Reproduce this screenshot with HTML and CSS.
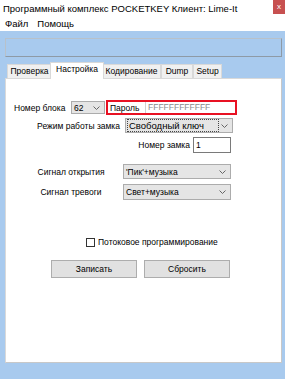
FILE: index.html
```html
<!DOCTYPE html>
<html>
<head>
    <title>POCKETKEY</title>
    <link rel="stylesheet" href="styles.css">
</head>
<body>
<div class="titlebar">
    <span class="title">Программный комплекс POCKETKEY Клиент: Lime-It</span>
    <span class="close">x</span>
</div>
<div class="menubar">
    <span>Файл</span>
    <span>Помощь</span>
</div>
<div class="client">
    <div class="status"></div>
    <div class="tabs">
        <div class="tab tab-check">Проверка</div>
        <div class="tab active">Настройка</div>
        <div class="tab tab-code">Кодирование</div>
        <div class="tab tab-dump">Dump</div>
        <div class="tab tab-setup">Setup</div>
    </div>
    <div class="panel">
        <div class="row row-block">
            <span class="lbl lbl-block">Номер блока</span>
            <div class="combo combo-block"><span>62</span><svg width="7" height="4" viewBox="0 0 7 4"><polyline points="0.5,0.5 3.5,3.5 6.5,0.5" fill="none" stroke="#666" stroke-width="1"/></svg></div>
            <div class="pass">
                <span class="lbl-pass">Пароль</span>
                <div class="pass-input">FFFFFFFFFFFF</div>
            </div>
        </div>
        <div class="row row-mode">
            <span class="lbl lbl-mode">Режим работы замка</span>
            <div class="combo combo-wide combo-focus"><span class="focus">Свободный ключ</span><svg width="7" height="4" viewBox="0 0 7 4"><polyline points="0.5,0.5 3.5,3.5 6.5,0.5" fill="none" stroke="#666" stroke-width="1"/></svg></div>
        </div>
        <div class="row row-lock">
            <span class="lbl lbl-lock">Номер замка</span>
            <div class="num-input">1</div>
        </div>
        <div class="row row-open">
            <span class="lbl lbl-signal">Сигнал открытия</span>
            <div class="combo combo-wide"><span>'Пик'+музыка</span><svg width="7" height="4" viewBox="0 0 7 4"><polyline points="0.5,0.5 3.5,3.5 6.5,0.5" fill="none" stroke="#666" stroke-width="1"/></svg></div>
        </div>
        <div class="row row-alarm">
            <span class="lbl lbl-signal">Сигнал тревоги</span>
            <div class="combo combo-wide combo-tall"><span>Свет+музыка</span><svg width="7" height="4" viewBox="0 0 7 4"><polyline points="0.5,0.5 3.5,3.5 6.5,0.5" fill="none" stroke="#666" stroke-width="1"/></svg></div>
        </div>
        <div class="row row-check">
            <span class="checkbox"></span>
            <span>Потоковое программирование</span>
        </div>
        <div class="row row-buttons">
            <div class="btn">Записать</div>
            <div class="btn">Сбросить</div>
        </div>
    </div>
</div>
</body>
</html>
```

FILE: styles.css
```css
* {
    box-sizing: border-box;
}
body {
    margin: 0;
    width: 285px;
    height: 379px;
    overflow: hidden;
    font-family: "Liberation Sans", Arial, sans-serif;
    font-size: 8.5px;
    color: #000;
    background-color: #a8caee;
}
.titlebar {
    height: 15px;
    background-color: #fff;
    display: flex;
    justify-content: space-between;
    align-items: flex-start;
}
.title {
    padding: 3px 0 0 3px;
    font-size: 9.5px;
}
.close {
    width: 12px;
    height: 14px;
    background-color: #c75050;
    color: #fff;
    font-size: 8px;
    line-height: 13px;
    text-align: center;
}
.menubar {
    height: 16px;
    background-color: #fff;
    display: flex;
    align-items: center;
    gap: 9px;
    padding-left: 5px;
    font-size: 9.5px;
}
.client {
    height: 348px;
    padding: 7px 3px 0 5px;
}
.status {
    height: 19px;
    border: 1px solid #b8c1ca;
    border-right-color: #8e9aa6;
    border-bottom-color: #8e9aa6;
    background-color: #a8caee;
}
.tabs {
    display: flex;
    align-items: flex-end;
    height: 16px;
    margin-top: 5px;
    padding-left: 2px;
}
.tab {
    height: 14px;
    line-height: 13px;
    text-align: center;
    border: 1px solid #d9d9d9;
    border-bottom: none;
    background-color: #f0f0f0;
}
.tab-check {
    width: 45px;
}
.tab-code {
    width: 59px;
}
.tab-dump {
    width: 32px;
}
.tab-setup {
    width: 29px;
}
.tab.active {
    position: relative;
    z-index: 1;
    width: 54px;
    height: 17px;
    margin: 0 -2px -1px;
    line-height: 12px;
    background-color: #fff;
}
.panel {
    height: 285px;
    border: 1px solid #d9d9d9;
    border-right-color: #c8c8c8;
    border-bottom-color: #c8c8c8;
    background-color: #fff;
}
.row {
    display: flex;
    align-items: center;
}
.lbl {
    flex-shrink: 0;
}
.combo {
    display: flex;
    align-items: center;
    justify-content: space-between;
    height: 15px;
    padding: 0 4px 0 2px;
    border: 1px solid #acacac;
    background-color: #e5e5e5;
}
.combo svg {
    flex-shrink: 0;
}

/* номер блока + пароль */
.row-block {
    margin-top: 21px;
    height: 15px;
    padding-left: 8px;
}
.lbl-block {
    width: 57px;
}
.combo-block {
    width: 34px;
    height: 13px;
}
.pass {
    display: flex;
    align-items: center;
    width: 131px;
    height: 15px;
    margin-left: 1px;
    padding-left: 2px;
    border: 2px solid #e81123;
}
.lbl-pass {
    width: 35px;
}
.pass-input {
    width: 90px;
    height: 11px;
    padding-left: 2px;
    line-height: 10px;
    color: #8a8a8a;
    border-left: 1px solid #d0d0d0;
}

/* режим работы */
.row-mode {
    margin-top: 3px;
}
.lbl-mode {
    width: 119px;
    padding-right: 5px;
    text-align: right;
}
.combo-wide {
    width: 108px;
}
.combo-focus {
    padding-left: 1px;
}
.focus {
    width: 92px;
    height: 13px;
    padding-left: 1px;
    line-height: 11px;
    border: 1px dotted #444;
    font-size: 9.5px;
}

/* номер замка */
.row-lock {
    margin-top: 4px;
}
.lbl-lock {
    width: 187px;
    padding-right: 3px;
    text-align: right;
}
.num-input {
    width: 38px;
    height: 16px;
    padding-left: 2px;
    line-height: 14px;
    border: 1px solid #7a7a7a;
}

/* сигналы */
.row-open {
    margin-top: 11px;
}
.row-alarm {
    margin-top: 5px;
}
.lbl-signal {
    width: 117px;
    padding-left: 13px;
    text-align: center;
}
.combo-tall {
    height: 16px;
}

.row-check {
    margin-top: 37px;
    padding-left: 80px;
    gap: 3px;
}
.checkbox {
    width: 9px;
    height: 9px;
    border: 1px solid #333;
}

.row-buttons {
    margin-top: 13px;
    padding-left: 45px;
    gap: 7px;
}
.btn {
    width: 86px;
    height: 18px;
    line-height: 16px;
    text-align: center;
    background-color: #e1e1e1;
    border: 1px solid #adadad;
}
```
